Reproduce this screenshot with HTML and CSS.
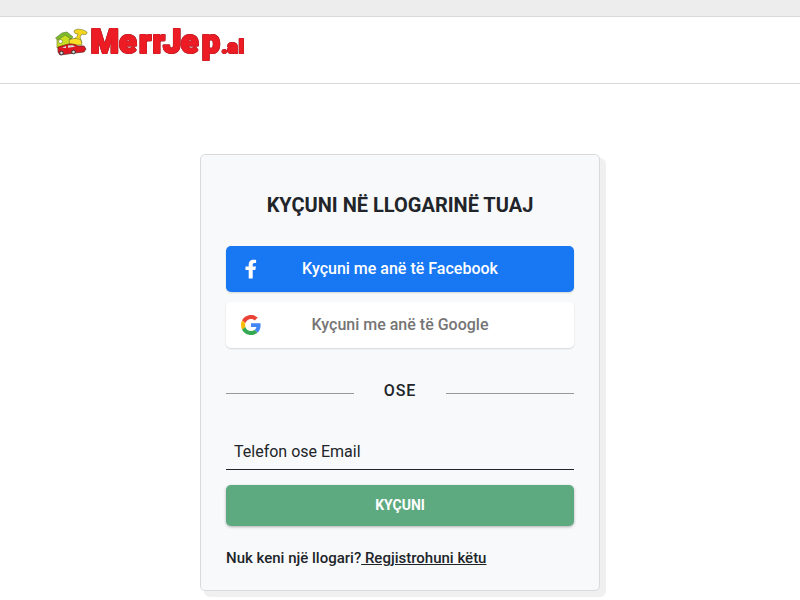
FILE: index.html
```html
<!DOCTYPE html>
<html lang="sq">
<head>
<meta charset="utf-8">
<title>MerrJep.al</title>
<link rel="stylesheet" href="styles.css">
</head>
<body>
<div class="topbar"></div>
<header class="header">
  <a class="logo">
    <svg width="194" height="44" viewBox="0 0 194 44">
      <g stroke="#6b7530" stroke-width=".6" stroke-linejoin="round">
        <path d="M3 12V22h14V11L10 7z" fill="#c8e021"/>
        <path d="M1.500 12 8 7l5-1 6 5-2 2-6-4-7 5z" fill="#79bd2c"/>
        <circle cx="6.500" cy="15.500" r="2" fill="#fff"/>
        <path d="M20 5c2-3 9-2 13 1 0 3-2 3-5 2l-2 3 2 6-11-1-2-3c5 1 8-1 9-5-3 0-4-1-4-3z" fill="#f7d51d"/>
        <path d="M15 14c4-2 8-2 12 0l1 5H16z" fill="#ffdf25"/>
      </g>
      <path d="M4 21l7-2c5-2 10-1 13 1l6 0 2 3-2 3-9 1-15 2-2-3z" fill="#df1720" stroke="#632020" stroke-width=".7"/>
      <path d="M8 22l4-2v2zM14 19.500l5-.3 2 1.500-7 1z" fill="#d8dadb"/>
      <g fill="#ddd" stroke="#333"><circle cx="7.500" cy="27" r="1.800"/><circle cx="19.500" cy="26" r="1.800"/></g>
      <text class="wordmark" y="27.300" font-size="32.500" x="36.500 65 85 98.500 109 126.800 147.700 167.500 173.500 184.700">MerrJep<tspan font-size="19">.al</tspan></text>
    </svg>
  </a>
</header>
<main class="card">
  <h1 class="title">KYÇUNI NË LLOGARINË TUAJ</h1>
  <a class="social facebook">
    <svg class="social-icon" width="20" height="20" viewBox="0 0 20 20"><path fill="#fff" d="M7.700 19.500v-8.600H4.500V7.600h3.200V6.100C7.700 2.300 9.400.7 12.700.7c.9 0 1.800.1 2.400.3v3h-1.500c-1.500 0-1.900.7-1.900 1.800v1.800h3.300l-.7 3.300h-2.600v8.600z"/></svg>
    Kyçuni me anë të Facebook
  </a>
  <a class="social google">
    <svg class="social-icon" width="20" height="20" viewBox="0 0 48 48"><path fill="#EA4335" d="M24 9.500c3.540 0 6.710 1.220 9.210 3.600l6.850-6.850C35.900 2.380 30.470 0 24 0 14.620 0 6.510 5.380 2.560 13.220l7.980 6.190C12.430 13.720 17.740 9.500 24 9.500z"/><path fill="#4285F4" d="M46.980 24.550c0-1.570-.15-3.090-.38-4.550H24v9.020h12.940c-.58 2.960-2.260 5.480-4.780 7.180l7.730 6c4.510-4.180 7.090-10.360 7.090-17.650z"/><path fill="#FBBC05" d="M10.530 28.590A14.500 14.500 0 0 1 9.770 24c0-1.600.27-3.140.76-4.590l-7.980-6.190A23.900 23.900 0 0 0 0 24c0 3.880.92 7.540 2.560 10.780z"/><path fill="#34A853" d="M24 48c6.480 0 11.930-2.130 15.890-5.810l-7.730-6c-2.150 1.450-4.920 2.300-8.160 2.300-6.260 0-11.570-4.220-13.470-9.910l-7.980 6.190C6.510 42.620 14.620 48 24 48z"/></svg>
    Kyçuni me anë të Google
  </a>
  <div class="divider"><span class="line"></span><span class="or">OSE</span><span class="line"></span></div>
  <div class="field">Telefon ose Email</div>
  <button class="submit" type="button">KYÇUNI</button>
  <p class="register">Nuk keni një llogari?<a class="link"> Regjistrohuni këtu</a></p>
</main>
</body>
</html>
```
FILE: styles.css
```css
* { box-sizing: border-box; }
body {
  margin: 0;
  height: 600px;
  overflow: hidden;
  background: #fff;
  color: #212529;
  font-family: Roboto, sans-serif;
  font-size: 16px;
}
.topbar { height: 17px; background: #ededed; border-bottom: 1px solid #dadada; }
.header { height: 67px; padding: 9px 54px; border-bottom: 1px solid #dadada; }
.logo svg { display: block; overflow: visible; }
.wordmark {
  font-family: Roboto, sans-serif;
  font-weight: 900;
  fill: #ed1c24;
  stroke: #e01c24;
  stroke-width: 2;
  stroke-linejoin: round;
  paint-order: stroke;
  filter: drop-shadow(0 0 .4px #501015);
}
.card {
  width: 400px;
  height: 437px;
  margin: 70px auto 0;
  padding: 35px 25px 0;
  background: #f8f9fb;
  border: 1px solid #dadada;
  border-radius: 5px;
  box-shadow: 5px 5px 0 1px #f0f0f0;
}
.title { margin: 0 0 26px; font-size: 20px; line-height: 30px; font-weight: 700; text-align: center; }
.social {
  display: flex;
  align-items: center;
  justify-content: center;
  position: relative;
  height: 46px;
  padding-bottom: 2px;
  margin-bottom: 10px;
  border-radius: 5px;
  font-weight: 500;
  box-shadow: 0 1px 2px rgba(0, 0, 0, .14);
}
.social-icon { position: absolute; left: 15px; top: 13px; }
.facebook { background: #1877f2; color: #fff; }
.google { background: #fff; color: #757575; }
.divider { display: flex; align-items: center; justify-content: space-between; height: 24px; margin-top: 31px; }
.line { width: 128px; height: 1px; margin-top: 5px; background: #999; }
.or { padding-bottom: 2px; font-weight: 500; letter-spacing: 1px; }
.field { height: 37px; margin-top: 30px; padding: 0 8px; line-height: 37px; border-bottom: 1px solid #212529; }
.submit {
  display: block;
  width: 100%;
  height: 41px;
  margin-top: 15px;
  padding: 0 0 2px;
  border: 0;
  border-radius: 5px;
  background: #5eaa80;
  color: #fff;
  font: 700 14px Roboto, sans-serif;
  box-shadow: 0 1px 3px rgba(0, 0, 0, .3);
}
.register { margin: 21px 0 0; font-size: 15px; line-height: 22px; font-weight: 500; }
.link { text-decoration: underline; }
```
